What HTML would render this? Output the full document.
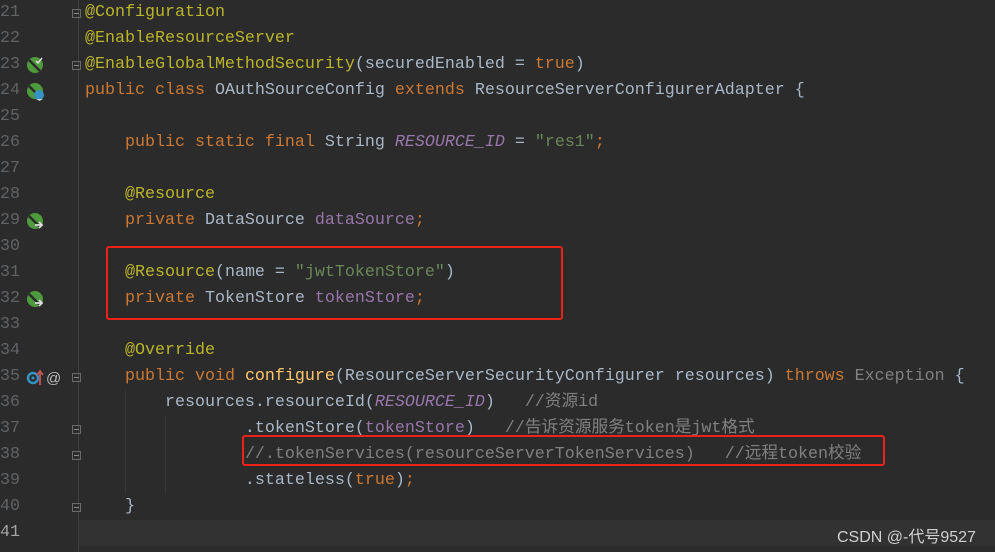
<!DOCTYPE html>
<html><head><meta charset="utf-8"><style>
html,body{margin:0;padding:0;}
body{width:995px;height:552px;background:#2b2b2b;position:relative;overflow:hidden;font-family:"Liberation Mono","Noto Sans CJK SC",monospace;font-size:16.67px;}
.ln{position:absolute;left:0;width:20px;text-align:right;color:#606366;height:26px;line-height:26px;}
.l{position:absolute;left:85px;height:26px;line-height:26px;white-space:pre;color:#a9b7c6;}
.a{color:#bbb529}.k{color:#cc7832}.s{color:#6a8759}.c{color:#9876aa;font-style:italic}.f{color:#9876aa}.m{color:#ffc66d}.g{color:#808080}.e{color:#808080}
.cur{position:absolute;left:79px;top:520px;width:916px;height:26px;background:#323232;}
.gut{position:absolute;left:78px;top:0;width:1px;height:552px;background:#3c3f41;}
.box{position:absolute;border:2.5px solid #f0211a;border-radius:3px;}
.guide{position:absolute;width:1px;background:#373737;}
.fold{position:absolute;left:72px;width:9px;height:9px;border:1px solid #6a6a6a;box-sizing:border-box;}
.fold:after{content:"";position:absolute;left:1px;top:3px;width:5px;height:1px;background:#8a8a8a;}
.wm{position:absolute;left:837px;top:523px;color:#d0d0d0;font-family:"Liberation Sans","Noto Sans CJK SC",sans-serif;font-size:16px;}
</style></head><body>
<div class="cur"></div>
<div class="gut"></div>
<div class="guide" style="left:125px;top:390px;height:104px"></div>
<div class="guide" style="left:165px;top:416px;height:78px"></div>
<div class="ln" style="top:0">21</div>
<div class="ln" style="top:26px">22</div>
<div class="ln" style="top:52px">23</div>
<div class="ln" style="top:78px">24</div>
<div class="ln" style="top:104px">25</div>
<div class="ln" style="top:130px">26</div>
<div class="ln" style="top:156px">27</div>
<div class="ln" style="top:182px">28</div>
<div class="ln" style="top:208px">29</div>
<div class="ln" style="top:234px">30</div>
<div class="ln" style="top:260px">31</div>
<div class="ln" style="top:286px">32</div>
<div class="ln" style="top:312px">33</div>
<div class="ln" style="top:338px">34</div>
<div class="ln" style="top:364px">35</div>
<div class="ln" style="top:390px">36</div>
<div class="ln" style="top:416px">37</div>
<div class="ln" style="top:442px">38</div>
<div class="ln" style="top:468px">39</div>
<div class="ln" style="top:494px">40</div>
<div class="ln" style="top:520px;color:#a4a3a3">41</div>

<div class="fold" style="top:9px"></div>
<div class="fold" style="top:61px"></div>
<div class="fold" style="top:373px"></div>
<div class="fold" style="top:425px"></div>
<div class="fold" style="top:451px"></div>
<div class="fold" style="top:503px"></div>

<svg style="position:absolute;left:26px;top:56px" width="20" height="20"><circle cx="9" cy="9" r="8" fill="#4e9a3c"/><path d="M3 4 L14 15" stroke="#2b2b2b" stroke-width="2.5"/><path d="M10 5 l2 2 l4 -5" stroke="#ddd" stroke-width="1.5" fill="none"/></svg>
<svg style="position:absolute;left:26px;top:82px" width="20" height="20"><circle cx="9" cy="9" r="8" fill="#4e9a3c"/><path d="M3 4 L14 15" stroke="#2b2b2b" stroke-width="2.5"/><circle cx="13" cy="13" r="5" fill="#3592c4"/><path d="M10 17 h7 l-3.5 2z" fill="#ccc"/></svg>
<svg style="position:absolute;left:26px;top:212px" width="20" height="20"><circle cx="9" cy="9" r="8" fill="#4e9a3c"/><path d="M3 4 L14 15" stroke="#2b2b2b" stroke-width="2.5"/><path d="M9 13 h6 M13 10 l3 3 l-3 3" stroke="#ddd" stroke-width="1.8" fill="none"/></svg>
<svg style="position:absolute;left:26px;top:290px" width="20" height="20"><circle cx="9" cy="9" r="8" fill="#4e9a3c"/><path d="M3 4 L14 15" stroke="#2b2b2b" stroke-width="2.5"/><path d="M9 13 h6 M13 10 l3 3 l-3 3" stroke="#ddd" stroke-width="1.8" fill="none"/></svg>
<svg style="position:absolute;left:26px;top:368px" width="38" height="20"><circle cx="7" cy="10" r="5" fill="none" stroke="#3592c4" stroke-width="2.5"/><circle cx="7" cy="10" r="1.5" fill="#3592c4"/><path d="M14 17 V4 M11 7 l3 -4 l3 4" stroke="#c75450" stroke-width="1.8" fill="none"/><text x="20" y="15" fill="#bbb" font-size="15" font-family="Liberation Sans">@</text></svg>

<div class="l" style="top:0"><span class="a">@Configuration</span></div>
<div class="l" style="top:26px"><span class="a">@EnableResourceServer</span></div>
<div class="l" style="top:52px"><span class="a">@EnableGlobalMethodSecurity</span>(securedEnabled = <span class="k">true</span>)</div>
<div class="l" style="top:78px"><span class="k">public class </span>OAuthSourceConfig <span class="k">extends </span>ResourceServerConfigurerAdapter {</div>
<div class="l" style="top:130px">    <span class="k">public static final </span>String <span class="c">RESOURCE_ID</span> = <span class="s">"res1"</span><span class="k">;</span></div>
<div class="l" style="top:182px">    <span class="a">@Resource</span></div>
<div class="l" style="top:208px">    <span class="k">private </span>DataSource <span class="f">dataSource</span><span class="k">;</span></div>
<div class="l" style="top:260px">    <span class="a">@Resource</span>(name = <span class="s">"jwtTokenStore"</span>)</div>
<div class="l" style="top:286px">    <span class="k">private </span>TokenStore <span class="f">tokenStore</span><span class="k">;</span></div>
<div class="l" style="top:338px">    <span class="a">@Override</span></div>
<div class="l" style="top:364px">    <span class="k">public void </span><span class="m">configure</span>(ResourceServerSecurityConfigurer resources) <span class="k">throws </span><span class="e">Exception</span> {</div>
<div class="l" style="top:390px">        resources.resourceId(<span class="c">RESOURCE_ID</span>)   <span class="g">//资源id</span></div>
<div class="l" style="top:416px">                .tokenStore(<span class="f">tokenStore</span>)   <span class="g">//告诉资源服务token是jwt格式</span></div>
<div class="l" style="top:442px">                <span class="g">//.tokenServices(resourceServerTokenServices)   //远程token校验</span></div>
<div class="l" style="top:468px">                .stateless(<span class="k">true</span>)<span class="k">;</span></div>
<div class="l" style="top:494px">    }</div>

<div class="box" style="left:106px;top:246px;width:453px;height:70px"></div>
<div class="box" style="left:242px;top:435px;width:639px;height:27px"></div>
<div class="wm">CSDN @-代号9527</div>
</body></html>
